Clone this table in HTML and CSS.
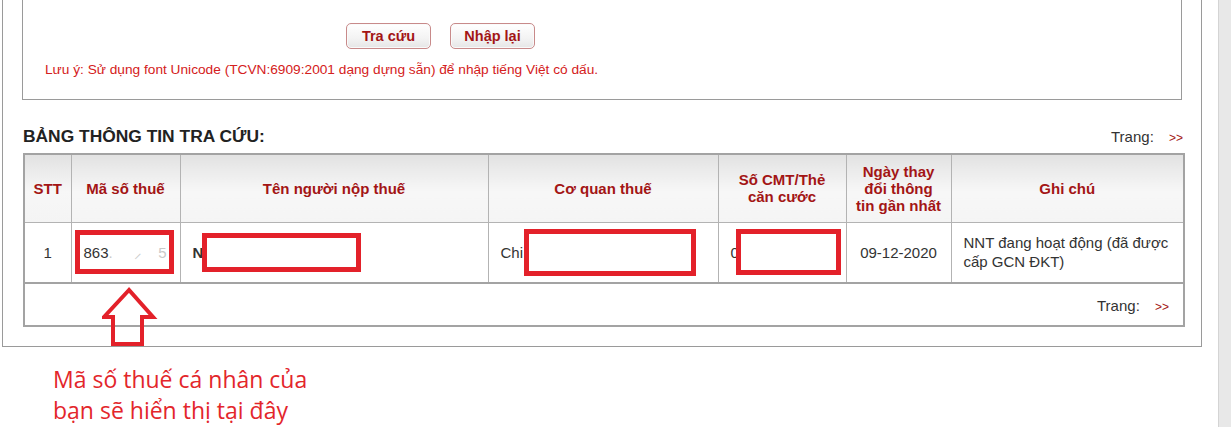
FILE: index.html
```html
<!DOCTYPE html>
<html lang="vi">
<head>
<meta charset="utf-8">
<title>Tra cứu mã số thuế</title>
<link rel="stylesheet" href="styles.css">
</head>
<body>
<div class="page">
  <div class="main">
    <div class="outer">
      <div class="form-box">
        <div class="buttons">
          <button class="btn" type="button">Tra cứu</button>
          <button class="btn" type="button">Nhập lại</button>
        </div>
        <p class="note">Lưu ý: Sử dụng font Unicode (TCVN:6909:2001 dạng dựng sẵn) để nhập tiếng Việt có dấu.</p>
      </div>
      <div class="result">
        <div class="result-head">
          <h2 class="title">BẢNG THÔNG TIN TRA CỨU:</h2>
          <div class="pager">Trang: <span class="next">&gt;&gt;</span></div>
        </div>
        <table class="grid">
          <colgroup>
            <col class="c1"><col class="c2"><col class="c3"><col class="c4"><col class="c5"><col class="c6"><col class="c7">
          </colgroup>
          <thead>
            <tr class="hrow">
              <th>STT</th>
              <th>Mã số thuế</th>
              <th>Tên người nộp thuế</th>
              <th>Cơ quan thuế</th>
              <th>Số CMT/Thẻ<br>căn cước</th>
              <th>Ngày thay<br>đổi thông<br>tin gần nhất</th>
              <th>Ghi chú</th>
            </tr>
          </thead>
          <tbody>
            <tr class="drow">
              <td class="center">1</td>
              <td class="mst">863<span class="blur">. &nbsp;&nbsp;&nbsp; ⸝ &nbsp;&nbsp; 5</span></td>
              <td><b>N</b></td>
              <td>Chi</td>
              <td>0</td>
              <td class="center">09-12-2020</td>
              <td>NNT đang hoạt động (đã được cấp GCN ĐKT)</td>
            </tr>
            <tr class="frow">
              <td colspan="7" class="foot"><span class="pager">Trang: <span class="next">&gt;&gt;</span></span></td>
            </tr>
          </tbody>
        </table>
      </div>
    </div>
    <p class="callout">Mã số thuế cá nhân của<br>bạn sẽ hiển thị tại đây</p>
  </div>
  <div class="scroll-strip"></div>
</div>

<div class="mark mark-mst"></div>
<div class="mark mark-ten fill"></div>
<div class="mark mark-cq fill"></div>
<div class="mark mark-cmt fill"></div>
<svg class="arrow" width="60" height="62" viewBox="0 0 60 62">
  <polygon points="27,3 2,30 11,30 11,57 40,57 40,30 51,30" fill="none" stroke="#e3212a" stroke-width="4" stroke-linejoin="miter"/>
</svg>
</body>
</html>
```

FILE: styles.css
```css
html, body {
  margin: 0;
  padding: 0;
  background: #ffffff;
}
body {
  font-family: "Liberation Sans", Arial, sans-serif;
  color: #333;
  width: 1231px;
  height: 427px;
  overflow: hidden;
  position: relative;
}
.page {
  display: flex;
  align-items: stretch;
  height: 427px;
}
.main {
  display: flex;
  flex-direction: column;
}
.outer {
  margin-left: 2px;
  width: 1200px;
  box-sizing: border-box;
  border: 1px solid #9a9a9a;
  border-top: none;
  padding: 0 19px 19px 19px;
}
.form-box {
  height: 100px;
  box-sizing: border-box;
  border: 1px solid #9a9a9a;
  border-top: none;
  padding-top: 23px;
}
.buttons {
  display: flex;
  gap: 19px;
  padding-left: 323px;
}
.btn {
  width: 85px;
  height: 26px;
  box-sizing: border-box;
  border: 1px solid #c88a8a;
  border-radius: 5px;
  background: linear-gradient(#ffffff, #f3f3f3 60%, #e6e6e6);
  box-shadow: inset 0 0 0 1px #fafafa;
  color: #a31515;
  font-family: "Liberation Sans", Arial, sans-serif;
  font-weight: bold;
  font-size: 14.5px;
  padding: 0;
  line-height: 22px;
}
.note {
  margin: 13px 0 0 22px;
  font-size: 13.7px;
  line-height: 16px;
  color: #d42020;
}
.result {
  margin-left: 1px;
  margin-right: -1px;
}
.result-head {
  display: flex;
  justify-content: space-between;
  align-items: center;
  height: 20px;
  margin-top: 26px;
  margin-bottom: 7px;
}
.title {
  margin: 0;
  font-size: 17.4px;
  font-weight: bold;
  color: #222;
}
.pager {
  font-size: 15px;
  color: #333;
}
.next {
  color: #a31515;
  font-size: 12px;
  margin-left: 11px;
}
.grid {
  width: 1160px;
  table-layout: fixed;
  border-collapse: collapse;
  border: 2px solid #a3a3a3;
  font-size: 15px;
}
.c1 { width: 47px; }
.c2 { width: 109px; }
.c3 { width: 308px; }
.c4 { width: 230px; }
.c5 { width: 128px; }
.c6 { width: 105px; }
.c7 { width: 233px; }
.grid th, .grid td {
  border: 1px solid #b3b3b3;
  padding: 0 12px;
}
.grid th {
  background: linear-gradient(#e2e2e2, #f7f7f7 55%, #f4f4f4);
  color: #a31515;
  font-size: 15px;
  font-weight: bold;
  line-height: 17px;
  text-align: center;
  padding: 0 2px;
}
.hrow { height: 68px; }
.drow { height: 61px; }
.frow { height: 43px; }
.grid td {
  color: #333;
  line-height: 19px;
}
.grid .center { text-align: center; }
.grid .mst { padding-left: 12px; white-space: nowrap; overflow: hidden; }
.blur { color: #c9c9c9; }
.drow td { border-bottom: 2px solid #a3a3a3; }
.foot {
  text-align: right;
  padding-right: 14px !important;
  padding-top: 4px !important;
}
.callout {
  margin: 17px 0 0 53px;
  font-family: "Open Sans", "Noto Sans", sans-serif;
  font-size: 23px;
  line-height: 31px;
  color: #e3262b;
}
.scroll-strip {
  margin-left: 16px;
  width: 13px;
  background: #e8e8e8;
  border-left: 1px solid #d4d4d4;
  box-sizing: border-box;
}
.mark {
  position: absolute;
  box-sizing: border-box;
  border: 5px solid #e3212a;
}
.mark.fill { background: #ffffff; }
.mark-mst { left: 75px; top: 230px; width: 99px; height: 44px; }
.mark-ten { left: 202px; top: 233px; width: 159px; height: 39px; }
.mark-cq { left: 524px; top: 229px; width: 172px; height: 47px; }
.mark-cmt { left: 736px; top: 229px; width: 105px; height: 46px; }
.arrow {
  position: absolute;
  left: 102px;
  top: 287px;
}
```
